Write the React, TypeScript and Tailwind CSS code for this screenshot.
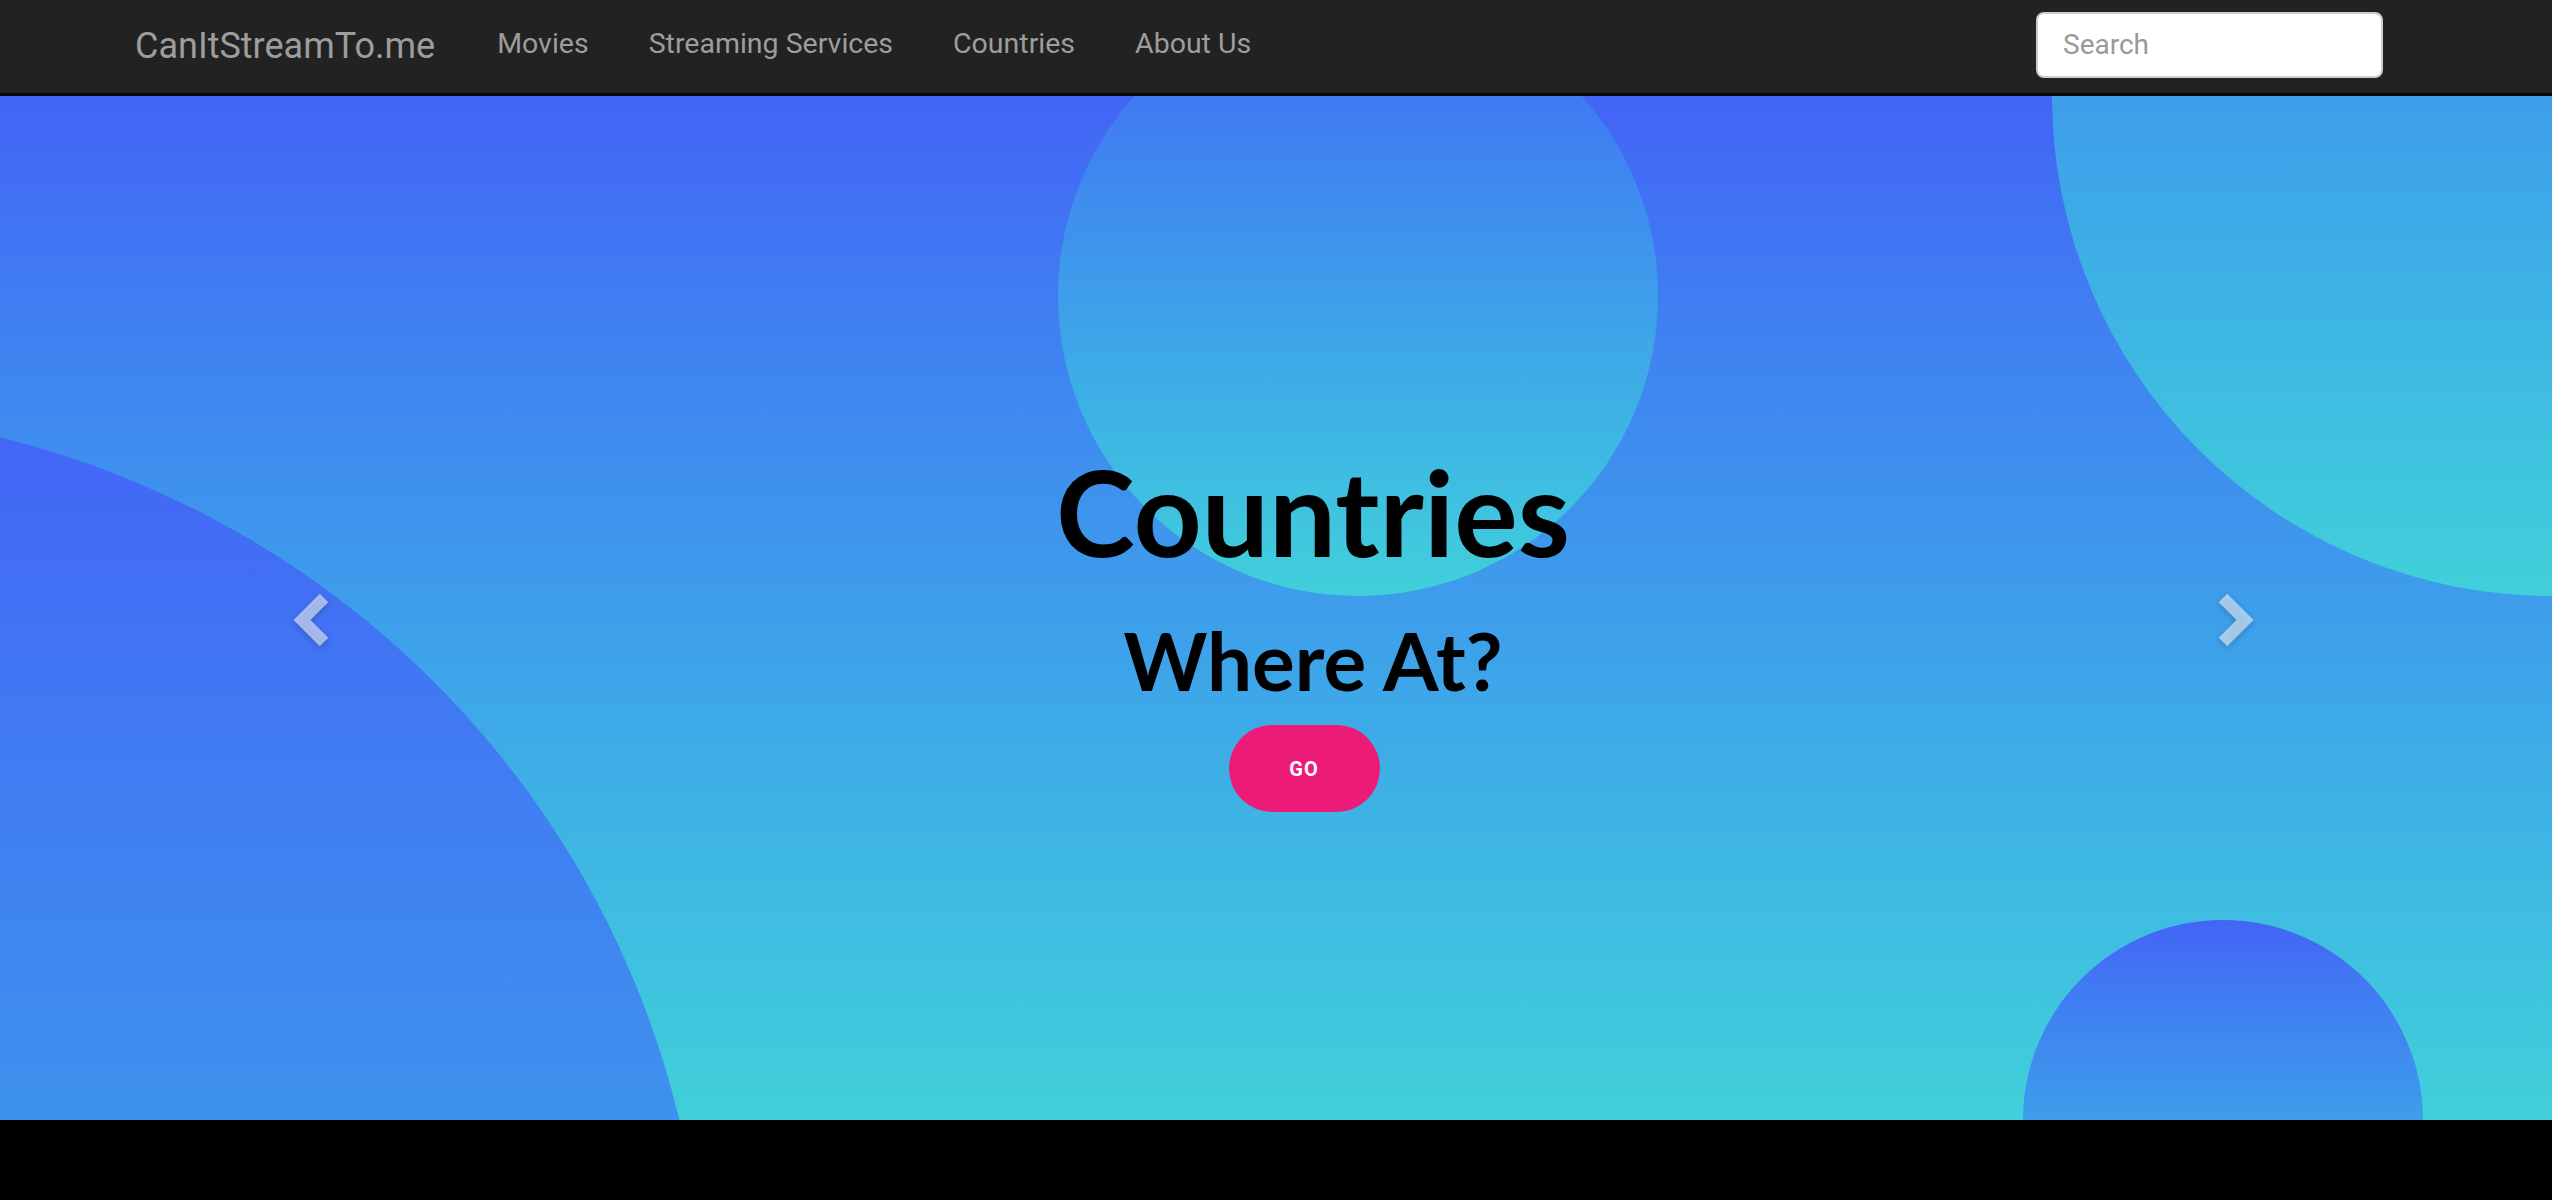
const links = ["Movies", "Streaming Services", "Countries", "About Us"];

const Navbar = () => {
  return (
    <nav className="flex h-[96px] shrink-0 items-center border-b-[3px] border-[#080808] bg-[#222222] font-['Roboto',sans-serif]">
      <a className="ml-[135px] -mt-[2px] text-[36px] leading-none text-[#9d9d9d]">
        CanItStreamTo.me
      </a>
      <ul className="ml-[62px] flex items-center gap-[60px] -mt-[4px]">
        {links.map((link) => (
          <li key={link} className="text-[28.5px] leading-none text-[#9d9d9d]">
            {link}
          </li>
        ))}
      </ul>
      <input
        placeholder="Search"
        className="ml-auto mr-[169px] -mt-[4px] h-[66px] w-[347px] rounded-lg border-2 border-[#cccccc] bg-white pl-[25px] text-[28px] text-[#555] outline-none placeholder:text-[#999999]"
      />
    </nav>
  );
};

const Arrow = ({ dir }: { dir: "left" | "right" }) => (
  <svg
    width="44"
    height="60"
    viewBox="0 0 44 60"
    className="drop-shadow-[0_2px_3px_rgba(0,0,0,0.35)]"
  >
    <polyline
      points={dir === "left" ? "36,8 14,30 36,52" : "8,8 30,30 8,52"}
      fill="none"
      stroke="rgba(255,255,255,0.55)"
      strokeWidth="12"
      strokeLinecap="butt"
      strokeLinejoin="miter"
    />
  </svg>
);

const Hero = () => {
  return (
    <section className="relative h-[1024px] shrink-0 overflow-hidden bg-gradient-to-b from-[#4364f6] to-[#41d0da]">
      {/* background bubbles */}
      <div className="absolute left-[1058px] top-[-100px] h-[600px] w-[600px] rounded-full bg-gradient-to-b from-[#4364f6] to-[#41d0da]" />
      <div className="absolute left-[2052px] top-[-500px] h-[1000px] w-[1000px] rounded-full bg-gradient-to-b from-[#4364f6] to-[#41d0da]" />
      <div className="absolute left-[-1145px] top-[315px] h-[1850px] w-[1850px] rounded-full bg-gradient-to-b from-[#4364f6] to-[#41d0da]" />
      <div className="absolute left-[2023px] top-[824px] h-[400px] w-[400px] rounded-full bg-gradient-to-b from-[#4364f6] to-[#41d0da]" />

      {/* carousel controls */}
      <div className="absolute left-[288px] top-[494px]">
        <Arrow dir="left" />
      </div>
      <div className="absolute left-[2215px] top-[494px]">
        <Arrow dir="right" />
      </div>

      <div className="relative flex flex-col items-center pt-[356px] text-black">
        <h1 className="pl-[74px] font-['Lato',sans-serif] text-[119px] font-bold leading-none">
          Countries
        </h1>
        <h2 className="mt-[49px] pl-[74px] font-['Lato',sans-serif] text-[80px] font-bold leading-none">
          Where At?
        </h2>
        <button className="ml-[56px] mt-[25px] h-[87px] w-[151px] rounded-full bg-[#ec1b78] font-['Roboto',sans-serif] text-[20px] font-bold tracking-wider text-white">
          GO
        </button>
      </div>
    </section>
  );
};

export default function App() {
  return (
    <div className="flex min-h-screen flex-col bg-black">
      <Navbar />
      <Hero />
    </div>
  );
}
